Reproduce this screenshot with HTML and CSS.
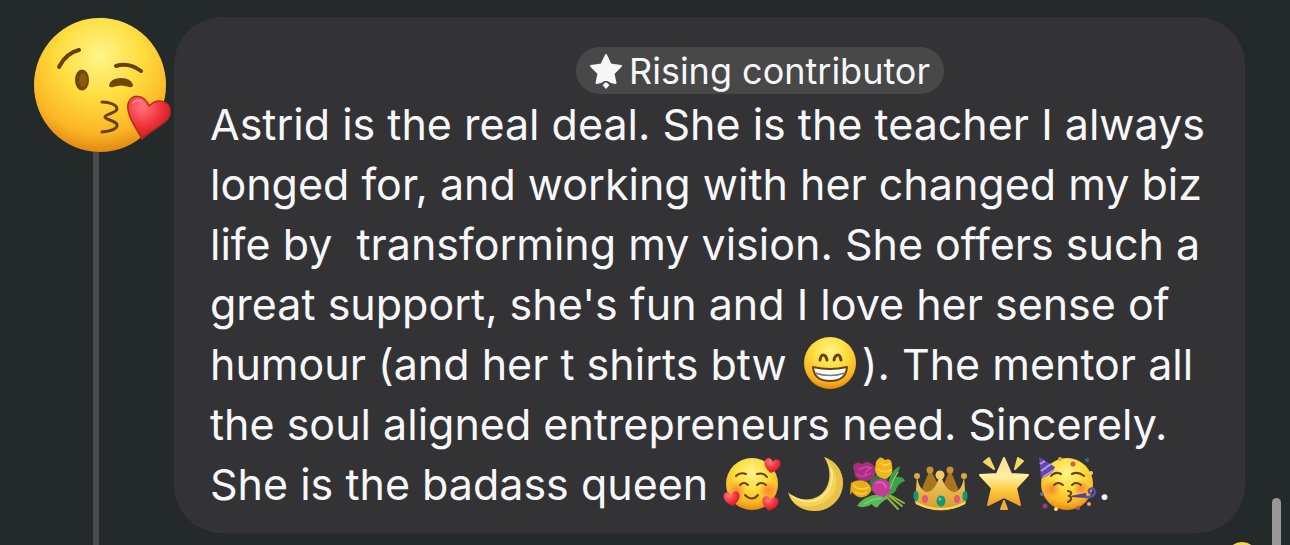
FILE: index.html
```html
<!DOCTYPE html>
<html lang="en">
<head>
    <meta charset="UTF-8">
    <meta name="viewport" content="width=device-width, initial-scale=1.0">
    <title>Comment</title>
    <link rel="stylesheet" href="styles.css">
</head>
<body>
    <!-- shared gradients and shapes -->
    <svg class="defs" width="0" height="0" aria-hidden="true">
        <defs>
            <radialGradient id="face" cx="50%" cy="28%" r="73%">
                <stop offset="0" stop-color="#fff58a"/>
                <stop offset="0.45" stop-color="#fedc3c"/>
                <stop offset="0.8" stop-color="#fbb526"/>
                <stop offset="1" stop-color="#e08510"/>
            </radialGradient>
            <linearGradient id="gold" x1="0" y1="0" x2="0" y2="1">
                <stop offset="0" stop-color="#f3d16a"/>
                <stop offset="1" stop-color="#d79a25"/>
            </linearGradient>
            <linearGradient id="starlight" x1="0" y1="0" x2="0" y2="1">
                <stop offset="0" stop-color="#f9dc9a"/>
                <stop offset="0.4" stop-color="#fff0a0"/>
                <stop offset="0.7" stop-color="#fbc83a"/>
                <stop offset="1" stop-color="#f19b2c"/>
            </linearGradient>
            <radialGradient id="red" cx="35%" cy="25%" r="80%">
                <stop offset="0" stop-color="#ff7680"/>
                <stop offset="0.5" stop-color="#f2383f"/>
                <stop offset="1" stop-color="#c81322"/>
            </radialGradient>
            <radialGradient id="blush">
                <stop offset="0" stop-color="#f4692c" stop-opacity="0.7"/>
                <stop offset="1" stop-color="#f4692c" stop-opacity="0"/>
            </radialGradient>
            <path id="heart" d="M0 7C-5 4-8 1-8-3C-8-8-2-9 0-4C2-9 8-8 8-3C8 1 5 4 0 7Z"/>
        </defs>
    </svg>

    <main class="thread">
        <div class="author">
            <svg class="avatar" viewBox="0 0 142 136" role="img" aria-label="Face blowing a kiss">
                <path d="M14 33L25 20L40 8L52 3L74 1L62 12L20 38Z" fill="#514741"/>
                <ellipse cx="68" cy="69" rx="66" ry="67" fill="url(#face)"/>
                <g fill="none" stroke="#664008" stroke-linecap="round">
                    <path d="M27 51Q34 37 47 34" stroke-width="4"/>
                    <path d="M84 50Q97 46 109 55" stroke-width="4"/>
                    <path d="M70 86C78 86 85 89 85 93C85 97 73 98 73 101C73 104 86 105 85 110C84 114 77 115 70 116" stroke-width="3"/>
                </g>
                <path d="M77 69Q79 62 89 62Q99 62 101 69Q101 72 97 71Q89 68 81 71Q77 72 77 69Z" fill="#704507"/>
                <ellipse cx="50" cy="64" rx="7" ry="10.500" fill="#6f4508"/>
                <ellipse cx="51" cy="64" rx="4" ry="7" fill="#8b5a0d"/>
                <path d="M110 123C105 113 94 99 96 88C98 78 112 77 117 90C126 81 140 85 138 98C136 108 118 114 110 123Z" fill="url(#red)" stroke="#b62a13" stroke-width="1.500"/>
                <path d="M101 87Q105 82 110 86" fill="none" stroke="#ff9aa0" stroke-width="2" stroke-linecap="round" opacity="0.7"/>
            </svg>
            <div class="line"></div>
        </div>

        <article class="bubble">
            <header class="header">
                <span class="badge">
                    <svg class="badge-icon" viewBox="0 0 34 38" aria-hidden="true">
                        <path d="M17 3L21.500 12.500L32 14L24.500 21.500L26.500 31L22 30L17 27L12 30L7.500 31L9.500 21.500L2 14L12.500 12.500Z" fill="#f7f7fa" stroke="#f7f7fa" stroke-width="2" stroke-linejoin="round"/>
                        <path d="M17 30L20.500 33L17 37L13.500 33Z" fill="#f7f7fa"/>
                    </svg>
                    Rising contributor
                </span>
            </header>
            <p class="text">
                Astrid is the real deal. She is the teacher I always<br>
                longed for, and working with her changed my biz<br>
                life by &nbsp;transforming my vision. She offers such a<br>
                great support, she's fun and I love her sense of<br>
                humour (and her t shirts btw
                <svg class="emoji" viewBox="0 0 63 56" role="img" aria-label="Grinning face">
                    <circle cx="31" cy="27" r="26" fill="url(#face)"/>
                    <g fill="none" stroke="#67420b" stroke-width="3" stroke-linecap="round">
                        <path d="M21 24Q22 19 24 19Q27 19 28 24"/>
                        <path d="M35 24Q36 19 39 19Q41 19 42 24"/>
                    </g>
                    <path d="M14 31Q31 35 48 31Q47 45 31 45Q15 45 14 31Z" fill="#fff" stroke="#67420b" stroke-width="2" stroke-linejoin="round"/>
                    <path d="M16 37Q31 42 46 37" fill="none" stroke="#777a87" stroke-width="1.500"/>
                </svg>). The mentor all<br>
                the soul aligned entrepreneurs need. Sincerely.<br>
                She is the badass queen
                <svg class="emoji" viewBox="0 0 63 56" role="img" aria-label="Smiling face with hearts">
                    <circle cx="32" cy="28" r="26" fill="url(#face)"/>
                    <circle cx="17" cy="34" r="9" fill="url(#blush)"/>
                    <circle cx="48" cy="34" r="9" fill="url(#blush)"/>
                    <g fill="none" stroke="#67420b" stroke-width="2" stroke-linecap="round">
                        <path d="M16 20Q20 16 26 18"/>
                        <path d="M37 18Q43 16 47 21"/>
                        <path d="M20 29Q24 25 28 29"/>
                        <path d="M37 29Q41 25 46 29"/>
                        <path d="M25 39Q32 46 38 39"/>
                    </g>
                    <g fill="url(#red)">
                        <use href="#heart" transform="translate(52 10) rotate(10)"/>
                        <use href="#heart" transform="translate(12 43) rotate(-8)"/>
                        <use href="#heart" transform="translate(50 48) rotate(8)"/>
                    </g>
                </svg><svg class="emoji" viewBox="0 0 63 56" role="img" aria-label="Crescent moon">
                    <path d="M41 1C53 5 60 15 60 27C60 43 47 55 32 55C19 55 8 48 5 36C12 43 24 46 34 41C48 34 50 14 41 1Z" fill="#f4d457"/>
                    <path d="M41 1C53 5 60 15 60 27C60 43 47 55 32 55C23 55 16 52 11 47C26 54 42 50 50 38C57 26 53 12 41 1Z" fill="#dfae3a" opacity="0.5"/>
                    <path d="M9 40C19 47 31 47 39 41C48 34 51 23 48 13" fill="none" stroke="#fff0a0" stroke-width="2" opacity="0.7"/>
                </svg><svg class="emoji" viewBox="0 0 63 56" role="img" aria-label="Bouquet">
                    <g fill="none" stroke="#8cb83c" stroke-width="2" stroke-linecap="round">
                        <path d="M38 36L56 50"/>
                        <path d="M36 36L52 53"/>
                        <path d="M40 37L58 47"/>
                    </g>
                    <path d="M42 31Q43 15 54 10Q52 18 50 21Q57 20 59 25Q52 27 49 36L42 40Z" fill="#3f9e48"/>
                    <path d="M11 50Q17 40 33 38L43 42Q34 46 32 51Q28 52 26 48Q19 53 11 50Z" fill="#58b957"/>
                    <path d="M44 33Q47 23 52 16M18 48Q27 42 36 42" fill="none" stroke="#9bdb77" stroke-width="1"/>
                    <path d="M24 22L34 17L42 23L37 34L23 35Z" fill="#2d7640"/>
                    <path d="M7 10Q10 4 16 8Q22 3 29 11Q31 20 24 24Q15 28 9 20Z" fill="#a92c82"/>
                    <path d="M13 14Q19 9 25 12Q20 14 19 19M10 18Q16 23 25 17" fill="none" stroke="#c94b9c" stroke-width="1.500"/>
                    <path d="M30 6Q34-2 39 4Q46 1 46 10Q48 20 39 23Q29 21 29 13Z" fill="#f3b51c"/>
                    <path d="M34 7Q39 11 44 7M31 13Q38 18 45 14" fill="none" stroke="#ffd447" stroke-width="1.500"/>
                    <path d="M5 27Q12 22 21 26Q29 33 22 39Q13 45 6 36L4 39Z" fill="#eaab19"/>
                    <path d="M7 29Q14 36 23 31M9 36Q16 40 21 36" fill="none" stroke="#ffd043" stroke-width="1.500"/>
                    <path d="M27 26Q35 20 43 26Q47 37 38 41Q27 40 26 32Z" fill="#c83c9c"/>
                    <path d="M30 27Q38 24 40 32" fill="none" stroke="#df64b7" stroke-width="1.500"/>
                </svg><svg class="emoji" viewBox="0 0 63 56" role="img" aria-label="Crown">
                    <path d="M10 42L14 30L21 13L29 28L35 28L41 13L48 30L53 42Z" fill="#a97521"/>
                    <circle cx="21" cy="14" r="3.500" fill="#c58f35"/>
                    <circle cx="41" cy="14" r="3.500" fill="#c58f35"/>
                    <path d="M8 20C9 30 14 36 18 36C24 36 29 27 31 18C34 27 39 36 45 36C50 36 54 30 55 20L57 47Q32 62 6 47Z" fill="url(#gold)"/>
                    <circle cx="8" cy="20" r="3" fill="#dda944"/>
                    <circle cx="31" cy="19" r="4.500" fill="#f2cd67"/>
                    <circle cx="55" cy="20" r="3" fill="#dda944"/>
                    <path d="M7 47Q32 59 56 47" fill="none" stroke="#f6d56a" stroke-width="2"/>
                    <ellipse cx="7" cy="40" rx="2.500" ry="5" fill="#149777"/>
                    <ellipse cx="56" cy="40" rx="2.500" ry="5" fill="#149777"/>
                    <ellipse cx="16" cy="43" rx="3" ry="4" fill="#e7597a"/>
                    <ellipse cx="48" cy="43" rx="3" ry="4" fill="#e7597a"/>
                    <ellipse cx="32" cy="45" rx="4.500" ry="5.500" fill="#149777"/>
                    <circle cx="31" cy="43" r="1.500" fill="#69d0aa"/>
                </svg><svg class="emoji" viewBox="0 0 63 56" role="img" aria-label="Glowing star">
                    <path d="M32 2L39 18L56 19L44 32L48 49L32 41L16 49L20 32L8 19L25 18Z" fill="url(#starlight)" stroke="url(#starlight)" stroke-width="2" stroke-linejoin="round"/>
                    <path d="M12 6L17 2L22 13Z" fill="#f5d765" stroke="#f5d765" stroke-width="2" stroke-linejoin="round"/>
                    <path d="M43 13L46 2L51 5Z" fill="#f5d765" stroke="#f5d765" stroke-width="2" stroke-linejoin="round"/>
                    <path d="M32 45L29 53H35Z" fill="#efac39" stroke="#efac39" stroke-width="2" stroke-linejoin="round"/>
                </svg><svg class="emoji" viewBox="0 0 63 56" role="img" aria-label="Partying face">
                    <circle cx="32" cy="28" r="26" fill="url(#face)"/>
                    <circle cx="17" cy="33" r="9" fill="url(#blush)"/>
                    <circle cx="46" cy="32" r="8" fill="url(#blush)"/>
                    <path d="M4 1L20 11Q17 20 6 22Z" fill="#6445b1"/>
                    <path d="M5 8L10 5M6 15L16 8M8 21L19 14" stroke="#b39de1" stroke-width="2"/>
                    <g fill="none" stroke="#67420b" stroke-width="2" stroke-linecap="round">
                        <path d="M16 20Q20 15 26 18"/>
                        <path d="M37 18Q43 15 49 20"/>
                        <path d="M19 29Q23 25 28 29"/>
                        <path d="M37 29Q41 25 46 29"/>
                        <path d="M33 35Q39 36 34 40Q39 43 33 46"/>
                    </g>
                    <path d="M35 40L51 37L52 42L35 41Z" fill="#54409c"/>
                    <path d="M50 41Q59 42 60 36Q59 31 55 33Q52 35 56 38" fill="none" stroke="#5c50ae" stroke-width="2.500"/>
                    <circle cx="38" cy="8" r="2.500" fill="#e65045"/>
                    <circle cx="52" cy="4" r="2" fill="#3f648f"/>
                    <circle cx="56" cy="17" r="2" fill="#f4cd60"/>
                    <circle cx="25" cy="3" r="2" fill="#eda650"/>
                    <circle cx="7" cy="38" r="2" fill="#5a70a1"/>
                    <circle cx="10" cy="50" r="2.500" fill="#9b3c68"/>
                    <circle cx="21" cy="53" r="2" fill="#ffe08a"/>
                    <circle cx="43" cy="52" r="2" fill="#a95a80"/>
                    <circle cx="54" cy="48" r="2" fill="#e9aa62"/>
                </svg>.
            </p>
        </article>
    </main>

    <!-- top edge of the next reaction -->
    <svg class="reaction" viewBox="0 0 32 3" aria-hidden="true">
        <circle cx="16" cy="16" r="16" fill="#f7d84b"/>
    </svg>
    <div class="scrollbar"></div>
</body>
</html>
```
FILE: styles.css
```css
* {
    box-sizing: border-box;
}
body {
    font-family: Inter, 'Liberation Sans', sans-serif;
    background-color: #24292a;
    color: #f7f7fa;
    margin: 0;
    position: relative;
}
.defs {
    position: absolute;
}
.thread {
    display: flex;
    min-height: 100vh;
}
.author {
    display: flex;
    flex-direction: column;
    flex: none;
    width: 174px;
    padding: 16px 0 0 32px;
}
.avatar {
    display: block;
    width: 142px;
    height: 136px;
}
.line {
    flex: 1;
    width: 6px;
    margin-left: 61px;
    background-color: #4b4d50;
}
.bubble {
    flex: 1;
    min-width: 0;
    align-self: flex-start;
    margin: 17px 45px 12px 0;
    padding: 30px 36px 19px;
    background-color: #333335;
    border-radius: 48px;
}
.header {
    display: flex;
    padding-left: 366px;
}
.badge {
    display: flex;
    align-items: center;
    gap: 6px;
    height: 47px;
    padding: 0 14px 0 13px;
    border-radius: 24px;
    background-color: #484848;
    font-size: 36px;
    white-space: nowrap;
}
.badge-icon {
    width: 34px;
    height: 38px;
}
.text {
    margin: 0;
    font-size: 43px;
    line-height: 60px;
    white-space: nowrap;
}
.emoji {
    width: 63px;
    height: 56px;
    vertical-align: -12px;
}
.reaction {
    position: absolute;
    right: 32px;
    bottom: 0;
    width: 32px;
    height: 3px;
}
.scrollbar {
    position: absolute;
    right: 9px;
    bottom: 0;
    width: 9px;
    height: 47px;
    border-radius: 5px 5px 0 0;
    background-color: #989898;
}
```
